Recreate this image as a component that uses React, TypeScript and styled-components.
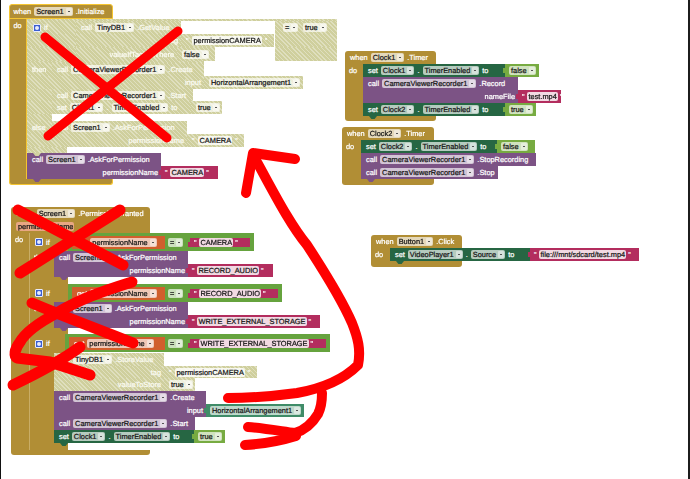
import React from "react";
import styled, { createGlobalStyle } from "styled-components";

const GOLD = "#b18e35";
const PURPLE = "#7c5385";
const DARK = "#266643";
const PINK = "#b32d5e";
const LIME = "#77ab41";
const TEAL = "#3f8c68";
const ORANGE = "#d05f2d";
const TEST = "#66a33e";

const GlobalStyle = createGlobalStyle`
  html, body {
    margin: 0;
    padding: 0;
    background: #fff;
  }
`;

const Canvas = styled.div`
  position: relative;
  width: 690px;
  height: 479px;
  box-sizing: border-box;
  overflow: hidden;
  background: #fff;
  border-left: 1px solid #111;
  border-right: 2px solid #1c1c1c;
  font-family: "Liberation Sans", Arial, sans-serif;
  font-size: 7.4px;
  text-rendering: geometricPrecision;
  -webkit-text-stroke: 0.22px currentColor;
`;

const Blocks = styled.div`
  filter: blur(0.3px);
`;

/* a stack sits on the workspace at its own spot, like a node on a diagram */
const Stack = styled.div<{ $x: number; $y: number }>`
  position: absolute;
  left: ${(p) => p.$x - 1}px;
  top: ${(p) => p.$y}px;
`;

const HatTop = styled.div<{ $w: number; $sel?: boolean }>`
  width: ${(p) => p.$w}px;
  box-sizing: border-box;
  background: ${GOLD};
  border-radius: 3px 3px 0 0;
  border: ${(p) => (p.$sel ? "1.5px solid #f5c531" : "0")};
  padding: ${(p) => (p.$sel ? "0 2px 0 3.5px" : "0 5px")};
`;

const HatRow = styled.div`
  display: flex;
  align-items: center;
  gap: 3px;
  height: 13px;
  color: #fff;
  white-space: nowrap;
`;

const DoRow = styled.div`
  display: flex;
  align-items: stretch;
`;

const Gutter = styled.div<{ $w: number; $sel?: boolean }>`
  flex: none;
  width: ${(p) => p.$w}px;
  box-sizing: border-box;
  background: ${GOLD};
  color: #fff;
  padding: ${(p) => (p.$sel ? "0 0 0 3.5px" : "0 0 0 4px")};
  line-height: 13px;
  border-left: ${(p) => (p.$sel ? "1.5px solid #f5c531" : "0")};
  border-right: ${(p) => (p.$sel ? "1.5px solid #f5c531" : "0")};
`;

const Body = styled.div`
  display: flex;
  flex-direction: column;
`;

const Foot = styled.div<{ $w: number; $h: number; $sel?: boolean }>`
  width: ${(p) => p.$w}px;
  height: ${(p) => p.$h}px;
  box-sizing: border-box;
  background: ${GOLD};
  border-radius: 0 0 3px 3px;
  border: ${(p) => (p.$sel ? "1.5px solid #f5c531" : "0")};
  border-top: 0;
`;

const Line = styled.div<{ $h?: number }>`
  display: flex;
  height: ${(p) => p.$h ?? 13}px;
`;

const Cell = styled.div<{
  $c?: string;
  $w?: number;
  $end?: boolean;
  $notch?: boolean;
}>`
  position: relative;
  flex: none;
  display: flex;
  align-items: center;
  justify-content: ${(p) => (p.$end ? "flex-end" : "flex-start")};
  gap: 3px;
  box-sizing: border-box;
  width: ${(p) => (p.$w ? `${p.$w}px` : "auto")};
  padding: 0 3px 0 5px;
  background: ${(p) => p.$c ?? "transparent"};
  color: #fff;
  white-space: nowrap;

  ${(p) =>
    p.$notch &&
    `&::after {
      content: "";
      position: absolute;
      z-index: 2;
      left: 6px;
      bottom: -3px;
      width: 8px;
      height: 3px;
      background: ${p.$c ?? "#d1d1a0"};
      clip-path: polygon(0 0, 100% 0, 70% 100%, 30% 100%);
    }`}
`;

const Hatched = styled(Cell)`
  background-color: #cfcf9d;
  background-image: repeating-linear-gradient(
    45deg,
    rgba(255, 255, 255, 0.34) 0 1px,
    transparent 1px 3px
  );
  color: #fbfbf2;
`;

const IfBar = styled(Cell)`
  background: ${GOLD};
  box-shadow: inset 1px 0 0 #c9ad66;
  padding: 0 0 0 5px;
`;

const White = styled.div<{ $w: number }>`
  flex: none;
  width: ${(p) => p.$w}px;
  background: #fff;
`;

const Chip = styled.span<{ $pale?: boolean; $tint?: string }>`
  display: inline-flex;
  align-items: center;
  gap: 1px;
  height: 9px;
  padding: 0 1px 0 2px;
  border-radius: 2px;
  background: ${(p) =>
    p.$tint ??
    (p.$pale ? "rgba(255, 255, 255, 0.82)" : "rgba(255, 255, 255, 0.66)")};
  color: #161616;
`;

const Caret = styled.span`
  width: 6px;
  height: 7px;
  margin-left: 1px;
  border-radius: 1px;
  background: rgba(255, 255, 255, 0.45);
  position: relative;

  &::after {
    content: "";
    position: absolute;
    left: 2px;
    top: 3px;
    width: 2px;
    height: 1px;
    background: #555;
  }
`;

const Mark = styled.span`
  color: #fff;
  font-size: 7px;
  line-height: 7px;
  height: 5px;
`;

const ValueBox = styled(Cell)`
  padding: 0 3px 0 4px;
  gap: 2px;

  &::before {
    content: "";
    position: absolute;
    left: -2px;
    top: 4px;
    width: 2px;
    height: 5px;
    background: ${(p) => p.$c};
  }
`;

const Gear = styled.span`
  flex: none;
  width: 8px;
  height: 8px;
  box-sizing: border-box;
  margin-left: 1px;
  background: #3c5fd0;
  border: 1px solid #e8ecfb;
  border-radius: 1px;
  position: relative;

  &::after {
    content: "";
    position: absolute;
    left: 1px;
    top: 1px;
    width: 4px;
    height: 4px;
    border-radius: 50%;
    background: #e8ecfb;
  }
`;

const TestWrap = styled.div<{ $w: number }>`
  flex: none;
  display: flex;
  align-items: center;
  height: 18px;
  width: ${(p) => p.$w}px;
  box-sizing: border-box;
  padding: 0 4px;
  background: ${TEST};
`;

const GetBox = styled.div<{ $w: number }>`
  display: flex;
  align-items: center;
  gap: 3px;
  height: 13px;
  width: ${(p) => p.$w}px;
  box-sizing: border-box;
  padding: 0 3px 0 5px;
  color: #fff;
  background: ${ORANGE};
`;

const EqPad = styled.div<{ $w: number }>`
  display: flex;
  align-items: center;
  justify-content: flex-start;
  padding-left: 3px;
  box-sizing: border-box;
  width: ${(p) => p.$w}px;
  flex: none;
`;

const Scribble = styled.svg`
  position: absolute;
  left: -1px;
  top: 0;
`;

const Drop = ({ children }: { children: React.ReactNode }) => (
  <Chip>
    {children}
    <Caret />
  </Chip>
);

const Str = ({ w, children }: { w: number; children: React.ReactNode }) => (
  <ValueBox $c={PINK} $w={w}>
    <Mark>"</Mark>
    <Chip $pale>{children}</Chip>
    <Mark>"</Mark>
  </ValueBox>
);

const Bool = ({ w, children }: { w: number; children: string }) => (
  <ValueBox $c={LIME} $w={w}>
    <Drop>{children}</Drop>
  </ValueBox>
);

const SetLine = ({
  w,
  comp,
  prop,
  notch,
}: {
  w: number;
  comp: string;
  prop: string;
  notch?: boolean;
}) => (
  <Cell $c={DARK} $w={w} $notch={notch}>
    set <Drop>{comp}</Drop> . <Drop>{prop}</Drop> to
  </Cell>
);

const CallLine = ({
  w,
  comp,
  method,
  notch,
}: {
  w: number;
  comp: string;
  method: string;
  notch?: boolean;
}) => (
  <Cell $c={PURPLE} $w={w} $notch={notch}>
    call <Drop>{comp}</Drop> {method}
  </Cell>
);

const Test = ({
  w,
  getW,
  str,
  strW,
}: {
  w: number;
  getW: number;
  str: string;
  strW: number;
}) => (
  <TestWrap $w={w}>
    <GetBox $w={getW}>
      get <Drop>permissionName</Drop>
    </GetBox>
    <EqPad $w={25}>
      <Drop>=</Drop>
    </EqPad>
    <Str w={strW}>{str}</Str>
  </TestWrap>
);

const strokes = [
  // first X
  { d: "M45 37 L167 138", w: 9 },
  { d: "M178 31 L48 136", w: 9 },
  // second X
  { d: "M18 210 L123 265", w: 11 },
  { d: "M120 210 L20 273", w: 11 },
  // scribble over the third test
  { d: "M132 282 C100 292 78 300 57 313 C40 322 25 333 20 342 C14 350 14 356 17 358 L50 362 L90 375", w: 11 },
  { d: "M32 303 C60 315 100 330 133 343", w: 11 },
  { d: "M80 347 C65 358 40 372 13 385", w: 11 },
  // long arrow
  { d: "M246 193 L253 153 L295 159", w: 10 },
  { d: "M253 155 C270 185 288 222 307 245 C322 268 342 300 352 323 C358 338 361 350 358 365 C345 378 325 388 297 393 C275 396 250 398 228 398", w: 10 },
  { d: "M322 393 C322 402 321 408 318 414 C312 424 305 430 295 433 C280 431 262 428 248 427", w: 10 },
  { d: "M296 436 C280 441 262 444 245 445", w: 10 },
];

export default function App() {
  return (
    <Canvas>
      <GlobalStyle />
      <Blocks>
        <Stack $x={9} $y={4}>
          <HatTop $w={104} $sel>
            <HatRow>
              when <Drop>Screen1</Drop> .Initialize
            </HatRow>
          </HatTop>
          <DoRow>
            <Gutter $w={18} $sel>
              do
            </Gutter>
            <Body>
              <Line $h={2}>
                <Hatched $w={310} />
              </Line>
              <Line>
                <Hatched $w={49}>
                  <Gear /> if
                </Hatched>
                <Hatched $w={105}>
                  call <Drop>TinyDB1</Drop> .GetValue
                </Hatched>
                <White $w={94} />
                <Hatched $w={62}>
                  <EqPad $w={20}>
                    <Drop>=</Drop>
                  </EqPad>
                  <Drop>true</Drop>
                </Hatched>
              </Line>
              <Line>
                <Hatched $w={49} />
                <Hatched $w={105} $end>
                  tag
                </Hatched>
                <Hatched $w={93}>
                  <Mark>"</Mark>
                  <Chip $pale>permissionCAMERA</Chip>
                  <Mark>"</Mark>
                </Hatched>
                <White $w={1} />
                <Hatched $w={62} />
              </Line>
              <Line $h={14}>
                <Hatched $w={49} />
                <Hatched $w={101} $end>
                  valueIfTagNotThere
                </Hatched>
                <Hatched $w={38}>
                  <Drop>false</Drop>
                </Hatched>
                <White $w={60} />
                <Hatched $w={62} />
              </Line>
              <Line $h={2}>
                <Hatched $w={177} />
              </Line>
              <Line>
                <Hatched $w={25}>then</Hatched>
                <Hatched $w={152}>
                  call <Drop>CameraViewerRecorder1</Drop> .Create
                </Hatched>
              </Line>
              <Line>
                <Hatched $w={177} $end>
                  input
                </Hatched>
                <Hatched $w={99}>
                  <Drop>HorizontalArrangement1</Drop>
                </Hatched>
              </Line>
              <Line $h={12}>
                <Hatched $w={25} />
                <Hatched $w={141}>
                  call <Drop>CameraViewerRecorder1</Drop> .Start
                </Hatched>
              </Line>
              <Line>
                <Hatched $w={25} />
                <Hatched $w={139}>
                  set <Drop>Clock1</Drop> . <Drop>TimerEnabled</Drop> to
                </Hatched>
                <Hatched $w={31}>
                  <Drop>true</Drop>
                </Hatched>
              </Line>
              <Line $h={7}>
                <Hatched $w={25} />
              </Line>
              <Line>
                <Hatched $w={25}>else</Hatched>
                <Hatched $w={135}>
                  call <Drop>Screen1</Drop> .AskForPermission
                </Hatched>
              </Line>
              <Line>
                <Hatched $w={160} $end>
                  permissionName
                </Hatched>
                <Hatched $w={57}>
                  <Mark>"</Mark>
                  <Chip $pale>CAMERA</Chip>
                  <Mark>"</Mark>
                </Hatched>
              </Line>
              <Line $h={6}>
                <Hatched $w={40} $notch />
              </Line>
              <Line>
                <CallLine w={134} comp="Screen1" method=".AskForPermission" />
              </Line>
              <Line>
                <Cell $c={PURPLE} $w={134} $end $notch>
                  permissionName
                </Cell>
                <Str w={57}>CAMERA</Str>
              </Line>
            </Body>
          </DoRow>
          <Foot $w={104} $h={6} $sel />
        </Stack>

        <Stack $x={11} $y={207}>
          <HatTop $w={139}>
            <HatRow>
              when <Drop>Screen1</Drop> .PermissionGranted
            </HatRow>
            <HatRow>
              <Chip $tint="#e8a783">permissionName</Chip>
            </HatRow>
          </HatTop>
          <DoRow>
            <Gutter $w={18}>do</Gutter>
            <Body>
              <Line $h={18}>
                <IfBar $w={39}>
                  <Gear /> if
                </IfBar>
                <Test w={186} getW={93} str="CAMERA" strW={60} />
              </Line>
              <Line>
                <IfBar $w={25}>then</IfBar>
                <CallLine w={134} comp="Screen1" method=".AskForPermission" />
              </Line>
              <Line>
                <IfBar $w={25} />
                <Cell $c={PURPLE} $w={134} $end $notch>
                  permissionName
                </Cell>
                <Str w={85}>RECORD_AUDIO</Str>
              </Line>
              <Line $h={7}>
                <IfBar $w={39} />
              </Line>
              <Line $h={18}>
                <IfBar $w={39}>
                  <Gear /> if
                </IfBar>
                <Test w={214} getW={93} str="RECORD_AUDIO" strW={88} />
              </Line>
              <Line>
                <IfBar $w={25}>then</IfBar>
                <CallLine w={134} comp="Screen1" method=".AskForPermission" />
              </Line>
              <Line>
                <IfBar $w={25} />
                <Cell $c={PURPLE} $w={134} $end $notch>
                  permissionName
                </Cell>
                <Str w={132}>WRITE_EXTERNAL_STORAGE</Str>
              </Line>
              <Line $h={6}>
                <IfBar $w={39} />
              </Line>
              <Line $h={19}>
                <IfBar $w={36}>
                  <Gear /> if
                </IfBar>
                <Test w={265} getW={100} str="WRITE_EXTERNAL_STORAGE" strW={136} />
              </Line>
              <Line>
                <IfBar $w={25}>then</IfBar>
                <Hatched $w={110}>
                  call <Drop>TinyDB1</Drop> .StoreValue
                </Hatched>
              </Line>
              <Line $h={12}>
                <IfBar $w={25} />
                <Hatched $w={110} $end>
                  tag
                </Hatched>
                <Hatched $w={93}>
                  <Mark>"</Mark>
                  <Chip $pale>permissionCAMERA</Chip>
                  <Mark>"</Mark>
                </Hatched>
              </Line>
              <Line>
                <IfBar $w={25} />
                <Hatched $w={110} $end>
                  valueToStore
                </Hatched>
                <Hatched $w={31}>
                  <Drop>true</Drop>
                </Hatched>
              </Line>
              <Line>
                <IfBar $w={25} />
                <CallLine w={152} comp="CameraViewerRecorder1" method=".Create" />
              </Line>
              <Line>
                <IfBar $w={25} />
                <Cell $c={PURPLE} $w={152} $end>
                  input
                </Cell>
                <ValueBox $c={TEAL} $w={98}>
                  <Drop>HorizontalArrangement1</Drop>
                </ValueBox>
              </Line>
              <Line>
                <IfBar $w={25} />
                <CallLine w={141} comp="CameraViewerRecorder1" method=".Start" />
              </Line>
              <Line>
                <IfBar $w={25} />
                <SetLine w={140} comp="Clock1" prop="TimerEnabled" notch />
                <Bool w={31}>true</Bool>
              </Line>
              <Line $h={7}>
                <IfBar $w={39} $notch $c={GOLD} />
              </Line>
            </Body>
          </DoRow>
          <Foot $w={139} $h={5} />
        </Stack>

        <Stack $x={345} $y={51}>
          <HatTop $w={91}>
            <HatRow>
              when <Drop>Clock1</Drop> .Timer
            </HatRow>
          </HatTop>
          <DoRow>
            <Gutter $w={18}>do</Gutter>
            <Body>
              <Line>
                <SetLine w={142} comp="Clock1" prop="TimerEnabled" />
                <Bool w={34}>false</Bool>
              </Line>
              <Line>
                <CallLine w={155} comp="CameraViewerRecorder1" method=".Record" />
              </Line>
              <Line>
                <Cell $c={PURPLE} $w={155} $end>
                  nameFile
                </Cell>
                <Str w={43}>test.mp4</Str>
              </Line>
              <Line>
                <SetLine w={142} comp="Clock2" prop="TimerEnabled" notch />
                <Bool w={31}>true</Bool>
              </Line>
            </Body>
          </DoRow>
          <Foot $w={91} $h={5} />
        </Stack>

        <Stack $x={342} $y={127}>
          <HatTop $w={92}>
            <HatRow>
              when <Drop>Clock2</Drop> .Timer
            </HatRow>
          </HatTop>
          <DoRow>
            <Gutter $w={19}>do</Gutter>
            <Body>
              <Line>
                <SetLine w={136} comp="Clock2" prop="TimerEnabled" />
                <Bool w={38}>false</Bool>
              </Line>
              <Line>
                <CallLine w={175} comp="CameraViewerRecorder1" method=".StopRecording" />
              </Line>
              <Line>
                <CallLine w={137} comp="CameraViewerRecorder1" method=".Stop" notch />
              </Line>
            </Body>
          </DoRow>
          <Foot $w={92} $h={6} />
        </Stack>

        <Stack $x={371} $y={235}>
          <HatTop $w={91}>
            <HatRow>
              when <Drop>Button1</Drop> .Click
            </HatRow>
          </HatTop>
          <DoRow>
            <Gutter $w={19}>do</Gutter>
            <Body>
              <Line>
                <SetLine w={140} comp="VideoPlayer1" prop="Source" notch />
                <Str w={109}>file:///mnt/sdcard/test.mp4</Str>
              </Line>
            </Body>
          </DoRow>
          <Foot $w={91} $h={6} />
        </Stack>
      </Blocks>

      <Scribble width={690} height={479} viewBox="0 0 690 479" fill="none">
        {strokes.map((s) => (
          <path
            key={s.d}
            d={s.d}
            stroke="#ff0000"
            strokeWidth={s.w}
            strokeLinecap="round"
            strokeLinejoin="round"
          />
        ))}
      </Scribble>
    </Canvas>
  );
}
